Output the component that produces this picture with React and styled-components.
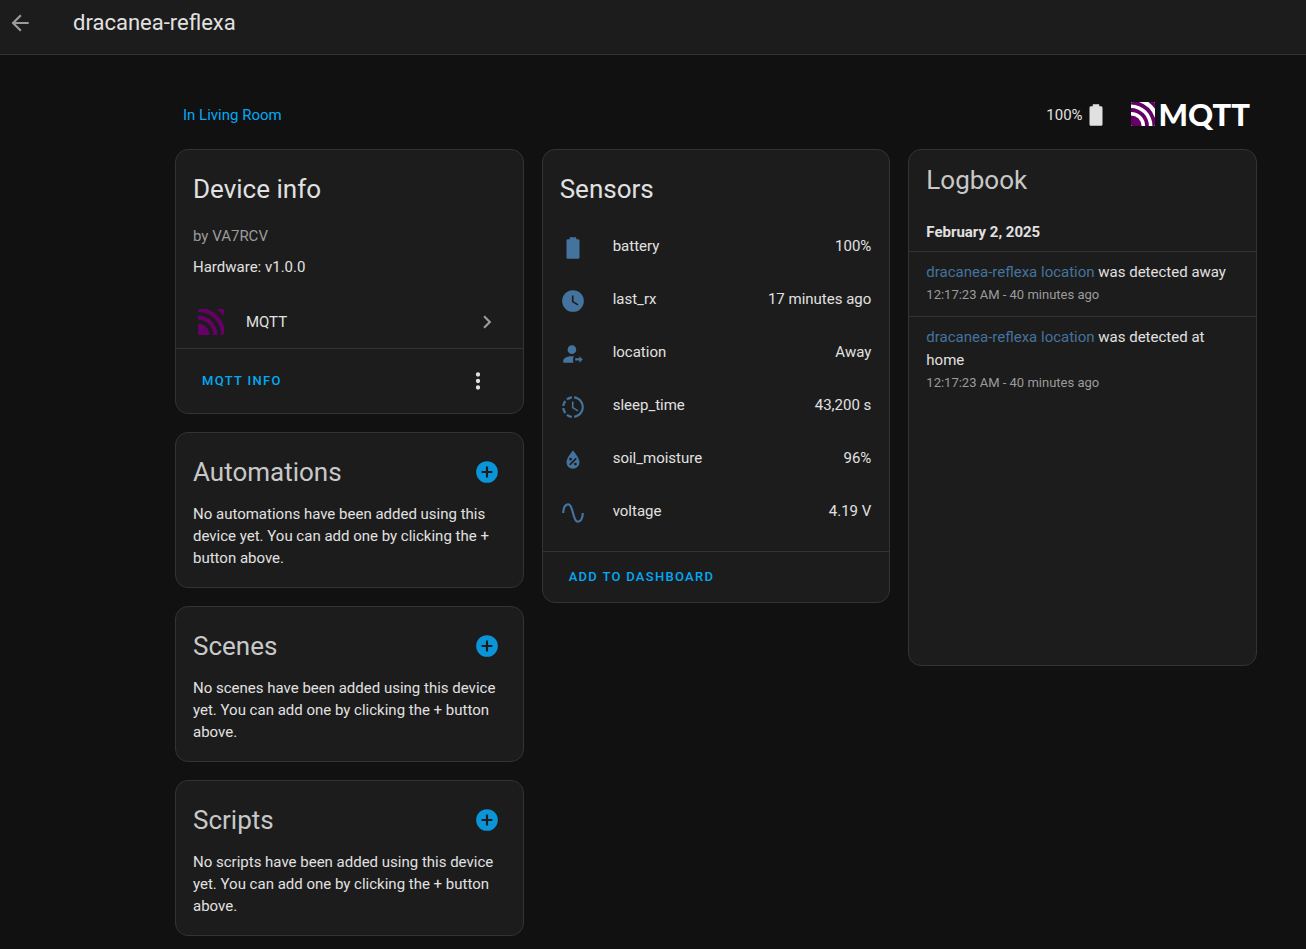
import React from 'react';
import styled, { createGlobalStyle } from 'styled-components';

const color = {
  page: '#111111',
  card: '#1c1c1c',
  line: '#333333',
  text: '#e1e1e1',
  soft: '#c8c8c8',
  muted: '#9b9b9b',
  primary: '#03a9f4',
  accent: '#0a95d9',
  state: '#44739e',
};

const GlobalStyle = createGlobalStyle`
  *, *::before, *::after { box-sizing: border-box; }
  body {
    margin: 0;
    background: ${color.page};
    color: ${color.text};
    font-family: Roboto, "Noto Sans", sans-serif;
    font-size: 15px;
    line-height: 22px;
  }
  h1, h2, h3, p, ul { margin: 0; padding: 0; font-weight: 400; }
  ul { list-style: none; }
  a { text-decoration: none; }
`;

const paths = {
  back: 'M20,11V13H8L13.5,18.5L12.08,19.92L4.16,12L12.08,4.08L13.5,5.5L8,11H20Z',
  battery:
    'M16.67,4H15V2H9V4H7.33A1.33,1.33 0 0,0 6,5.33V20.67C6,21.4 6.6,22 7.33,22H16.67A1.33,1.33 0 0,0 18,20.67V5.33C18,4.6 17.4,4 16.67,4Z',
  clock:
    'M12,2A10,10 0 0,0 2,12A10,10 0 0,0 12,22A10,10 0 0,0 22,12A10,10 0 0,0 12,2M16.2,16.2L11,13V7H12.5V12.2L17,14.9L16.2,16.2Z',
  person:
    'M11 4C8.8 4 7 5.8 7 8S8.8 12 11 12 15 10.2 15 8 13.2 4 11 4M11 14C6.6 14 3 15.8 3 18V20H12.5C12.2 19.2 12 18.4 12 17.5C12 16.3 12.3 15.2 12.9 14.1C12.3 14.1 11.7 14 11 14M18 20V18H14V16H18V14L21 17L18 20',
  progress:
    'M13,2.03V2.05L13,4.05C17.39,4.59 20.5,8.58 19.96,12.97C19.5,16.61 16.64,19.5 13,19.93V21.93C18.5,21.38 22.5,16.5 21.95,11C21.5,6.25 17.73,2.5 13,2.03M11,2.06C9.05,2.25 7.19,3 5.67,4.26L7.1,5.74C8.22,4.84 9.57,4.26 11,4.06V2.06M4.26,5.67C3,7.19 2.25,9.04 2.05,11H4.05C4.24,9.58 4.8,8.23 5.69,7.1L4.26,5.67M2.06,13C2.26,14.96 3.03,16.81 4.27,18.33L5.69,16.9C4.81,15.77 4.24,14.42 4.06,13H2.06M7.1,18.37L5.67,19.74C7.18,21 9.04,21.79 11,22V20C9.58,19.82 8.23,19.25 7.1,18.37M12.5,7V12.25L17,14.92L16.25,16.15L11,13V7H12.5Z',
  moisture:
    'M12,3.25C12,3.25 6,10 6,14C6,17.32 8.69,20 12,20A6,6 0 0,0 18,14C18,10 12,3.25 12,3.25M14.47,9.97L15.53,11.03L9.53,17.03L8.47,15.97M9.75,10A1.25,1.25 0 0,1 11,11.25A1.25,1.25 0 0,1 9.75,12.5A1.25,1.25 0 0,1 8.5,11.25A1.25,1.25 0 0,1 9.75,10M14.25,14.5A1.25,1.25 0 0,1 15.5,15.75A1.25,1.25 0 0,1 14.25,17A1.25,1.25 0 0,1 13,15.75A1.25,1.25 0 0,1 14.25,14.5Z',
  sine:
    'M16.5,21C13.5,21 12.31,16.76 11.05,12.28C10.14,9.04 9,5 7.5,5C4.11,5 4,11.93 4,12H2C2,11.63 2.06,3 7.5,3C10.5,3 11.71,7.25 12.97,11.74C13.83,14.8 15,19 16.5,19C19.94,19 20.03,12.07 20.03,12H22.03C22.03,12.37 21.97,21 16.5,21Z',
  plus:
    'M17,13H13V17H11V13H7V11H11V7H13V11H17M12,2A10,10 0 0,0 2,12A10,10 0 0,0 12,22A10,10 0 0,0 22,12A10,10 0 0,0 12,2Z',
  chevron: 'M8.59,16.58L13.17,12L8.59,7.41L10,6L16,12L10,18L8.59,16.58Z',
  dots:
    'M12,16A2,2 0 0,1 14,18A2,2 0 0,1 12,20A2,2 0 0,1 10,18A2,2 0 0,1 12,16M12,10A2,2 0 0,1 14,12A2,2 0 0,1 12,14A2,2 0 0,1 10,12A2,2 0 0,1 12,10M12,4A2,2 0 0,1 14,6A2,2 0 0,1 12,8A2,2 0 0,1 10,6A2,2 0 0,1 12,4Z',
};

const Svg = styled.svg`
  display: block;
  flex: none;
  width: 26px;
  height: 26px;
  fill: currentColor;
`;

const Icon = ({ name }) => (
  <Svg viewBox="0 0 24 24" aria-hidden="true">
    <path d={paths[name]} />
  </Svg>
);

const Mark = styled.svg`
  display: block;
  flex: none;
  width: ${(p) => p.$size}px;
  height: ${(p) => p.$size}px;
  background: ${(p) => (p.$light ? '#ffffff' : 'transparent')};
  border-radius: 1px;
`;

const MqttMark = ({ size, light }) => (
  <Mark viewBox="0 0 75 75" $size={size} $light={light} aria-hidden="true">
    <g fill="#660066">
      <path d="M0 42A33 33 0 0 1 33 75H3a3 3 0 0 1-3-3Z" />
      <path d="M0 19A56 56 0 0 1 56 75H44A44 44 0 0 0 0 31Z" />
      <path d="M0 3a3 3 0 0 1 3-3H25A79 79 0 0 1 75 50V72a3 3 0 0 1-3 3H67A67 67 0 0 0 0 8Z" />
      <path d="M54 0H72a3 3 0 0 1 3 3V21A92 92 0 0 0 54 0Z" />
    </g>
  </Mark>
);

const TopBar = styled.header`
  display: flex;
  align-items: center;
  gap: 40px;
  height: 55px;
  padding: 0 7px 8px;
  background: ${color.card};
  border-bottom: 1px solid ${color.line};
`;

const IconButton = styled.button`
  display: flex;
  padding: 0;
  border: 0;
  background: none;
  color: ${(p) => p.$tone};
  cursor: pointer;
`;

const PageTitle = styled.h1`
  font-size: 22px;
  line-height: 28px;
`;

const Main = styled.main`
  padding: 40px 49px 14px 175px;
`;

const Summary = styled.div`
  display: flex;
  align-items: center;
  justify-content: space-between;
  height: 40px;
  padding: 0 7px 0 8px;
  margin-bottom: 14px;
`;

const AreaLink = styled.a`
  color: ${color.primary};
`;

const SummaryRight = styled.div`
  display: flex;
  align-items: center;
  gap: 22px;
`;

const Battery = styled.span`
  display: flex;
  align-items: center;
`;

const Logo = styled.span`
  display: flex;
  align-items: center;
  gap: 4px;
  padding-bottom: 3px;
  color: #ffffff;
  font-family: Lato, sans-serif;
  font-size: 31px;
  font-weight: 900;
  line-height: 24px;
`;

const Columns = styled.div`
  display: grid;
  grid-template-columns: repeat(3, minmax(0, 1fr));
  align-items: start;
  gap: 18px;
`;

const Column = styled.div`
  display: grid;
  gap: 18px;
`;

const Card = styled.section`
  background: ${color.card};
  border: 1px solid ${color.line};
  border-radius: 13px;
  min-height: ${(p) => (p.$tall ? '517px' : 'auto')};
`;

const CardTitle = styled.h2`
  font-size: 26px;
  line-height: 36px;
  color: ${(p) => (p.$soft ? color.soft : color.text)};
`;

const CardHead = styled.div`
  display: flex;
  align-items: center;
  justify-content: space-between;
  padding: ${(p) => (p.$tight ? '12px' : '21px')} 23px 0 17px;
`;

const InfoBody = styled.div`
  display: grid;
  gap: 9px;
  padding: 18px 17px 22px;
`;

const Muted = styled.p`
  color: ${color.muted};
`;

const IntegrationLink = styled.a`
  display: flex;
  align-items: center;
  height: 44px;
  margin-bottom: 4px;
  padding: 0 23px 0 22px;
  color: ${color.text};
`;

const IntegrationName = styled.span`
  flex: 1;
  margin-left: 22px;
`;

const Chevron = styled.span`
  color: ${color.muted};
`;

const CardActions = styled.div`
  display: flex;
  align-items: center;
  justify-content: space-between;
  height: ${(p) => (p.$tall ? '65px' : '51px')};
  padding: 0 32px 0 26px;
  border-top: 1px solid ${color.line};
`;

const TextButton = styled.button`
  padding: 0;
  border: 0;
  background: none;
  color: ${color.primary};
  font: 500 13px/20px Roboto, sans-serif;
  letter-spacing: 0.1em;
  text-transform: uppercase;
  cursor: pointer;
`;

const EmptyText = styled.p`
  padding: 13px 17px 18px;
`;

const SensorList = styled.ul`
  display: grid;
  gap: 9px;
  padding: 17px 18px 18px 17px;
`;

const SensorRow = styled.li`
  display: flex;
  align-items: center;
  height: 44px;
`;

const StateIcon = styled.span`
  margin-right: 27px;
  padding-top: 3px;
  color: ${color.state};
`;

const SensorName = styled.span`
  flex: 1;
`;

const LogDate = styled.h3`
  padding: 23px 17px 8px;
  font-size: 15px;
  font-weight: 700;
`;

const LogEntry = styled.li`
  padding: 9px 17px 10px;
  border-top: 1px solid ${color.line};
`;

const LogText = styled.p`
  line-height: 23px;
`;

const EntityLink = styled.a`
  color: ${color.state};
`;

const LogTime = styled.p`
  color: ${color.muted};
  font-size: 13px;
`;

const sensors = [
  ['battery', 'battery', '100%'],
  ['clock', 'last_rx', '17 minutes ago'],
  ['person', 'location', 'Away'],
  ['progress', 'sleep_time', '43,200 s'],
  ['moisture', 'soil_moisture', '96%'],
  ['sine', 'voltage', '4.19 V'],
];

const related = ['Automations', 'Scenes', 'Scripts'];

const log = [
  { id: 1, message: ' was detected away', time: '12:17:23 AM - 40 minutes ago' },
  { id: 2, message: ' was detected at home', time: '12:17:23 AM - 40 minutes ago' },
];

const RelatedCard = ({ title }) => (
  <Card>
    <CardHead>
      <CardTitle $soft>{title}</CardTitle>
      <IconButton $tone={color.accent} aria-label={`Add ${title.toLowerCase()}`}>
        <Icon name="plus" />
      </IconButton>
    </CardHead>
    <EmptyText>
      {`No ${title.toLowerCase()} have been added using this device yet. You can add one by clicking the + button above.`}
    </EmptyText>
  </Card>
);

export default function App() {
  return (
    <>
      <GlobalStyle />
      <TopBar>
        <IconButton $tone={color.muted} aria-label="Back">
          <Icon name="back" />
        </IconButton>
        <PageTitle>dracanea-reflexa</PageTitle>
      </TopBar>
      <Main>
        <Summary>
          <AreaLink href="#area">In Living Room</AreaLink>
          <SummaryRight>
            <Battery>
              100%
              <Icon name="battery" />
            </Battery>
            <Logo>
              <MqttMark size={24} light />
              MQTT
            </Logo>
          </SummaryRight>
        </Summary>
        <Columns>
          <Column>
            <Card>
              <CardHead>
                <CardTitle>Device info</CardTitle>
              </CardHead>
              <InfoBody>
                <Muted>by VA7RCV</Muted>
                <p>Hardware: v1.0.0</p>
              </InfoBody>
              <IntegrationLink href="#mqtt">
                <MqttMark size={26} />
                <IntegrationName>MQTT</IntegrationName>
                <Chevron>
                  <Icon name="chevron" />
                </Chevron>
              </IntegrationLink>
              <CardActions $tall>
                <TextButton>MQTT info</TextButton>
                <IconButton $tone={color.text} aria-label="More options">
                  <Icon name="dots" />
                </IconButton>
              </CardActions>
            </Card>
            {related.map((title) => (
              <RelatedCard key={title} title={title} />
            ))}
          </Column>
          <Card>
            <CardHead>
              <CardTitle>Sensors</CardTitle>
            </CardHead>
            <SensorList>
              {sensors.map(([icon, name, value]) => (
                <SensorRow key={name}>
                  <StateIcon>
                    <Icon name={icon} />
                  </StateIcon>
                  <SensorName>{name}</SensorName>
                  <span>{value}</span>
                </SensorRow>
              ))}
            </SensorList>
            <CardActions>
              <TextButton>Add to dashboard</TextButton>
            </CardActions>
          </Card>
          <Card $tall>
            <CardHead $tight>
              <CardTitle $soft>Logbook</CardTitle>
            </CardHead>
            <LogDate>February 2, 2025</LogDate>
            <ul>
              {log.map((entry) => (
                <LogEntry key={entry.id}>
                  <LogText>
                    <EntityLink href="#location">dracanea-reflexa location</EntityLink>
                    {entry.message}
                  </LogText>
                  <LogTime>{entry.time}</LogTime>
                </LogEntry>
              ))}
            </ul>
          </Card>
        </Columns>
      </Main>
    </>
  );
}
